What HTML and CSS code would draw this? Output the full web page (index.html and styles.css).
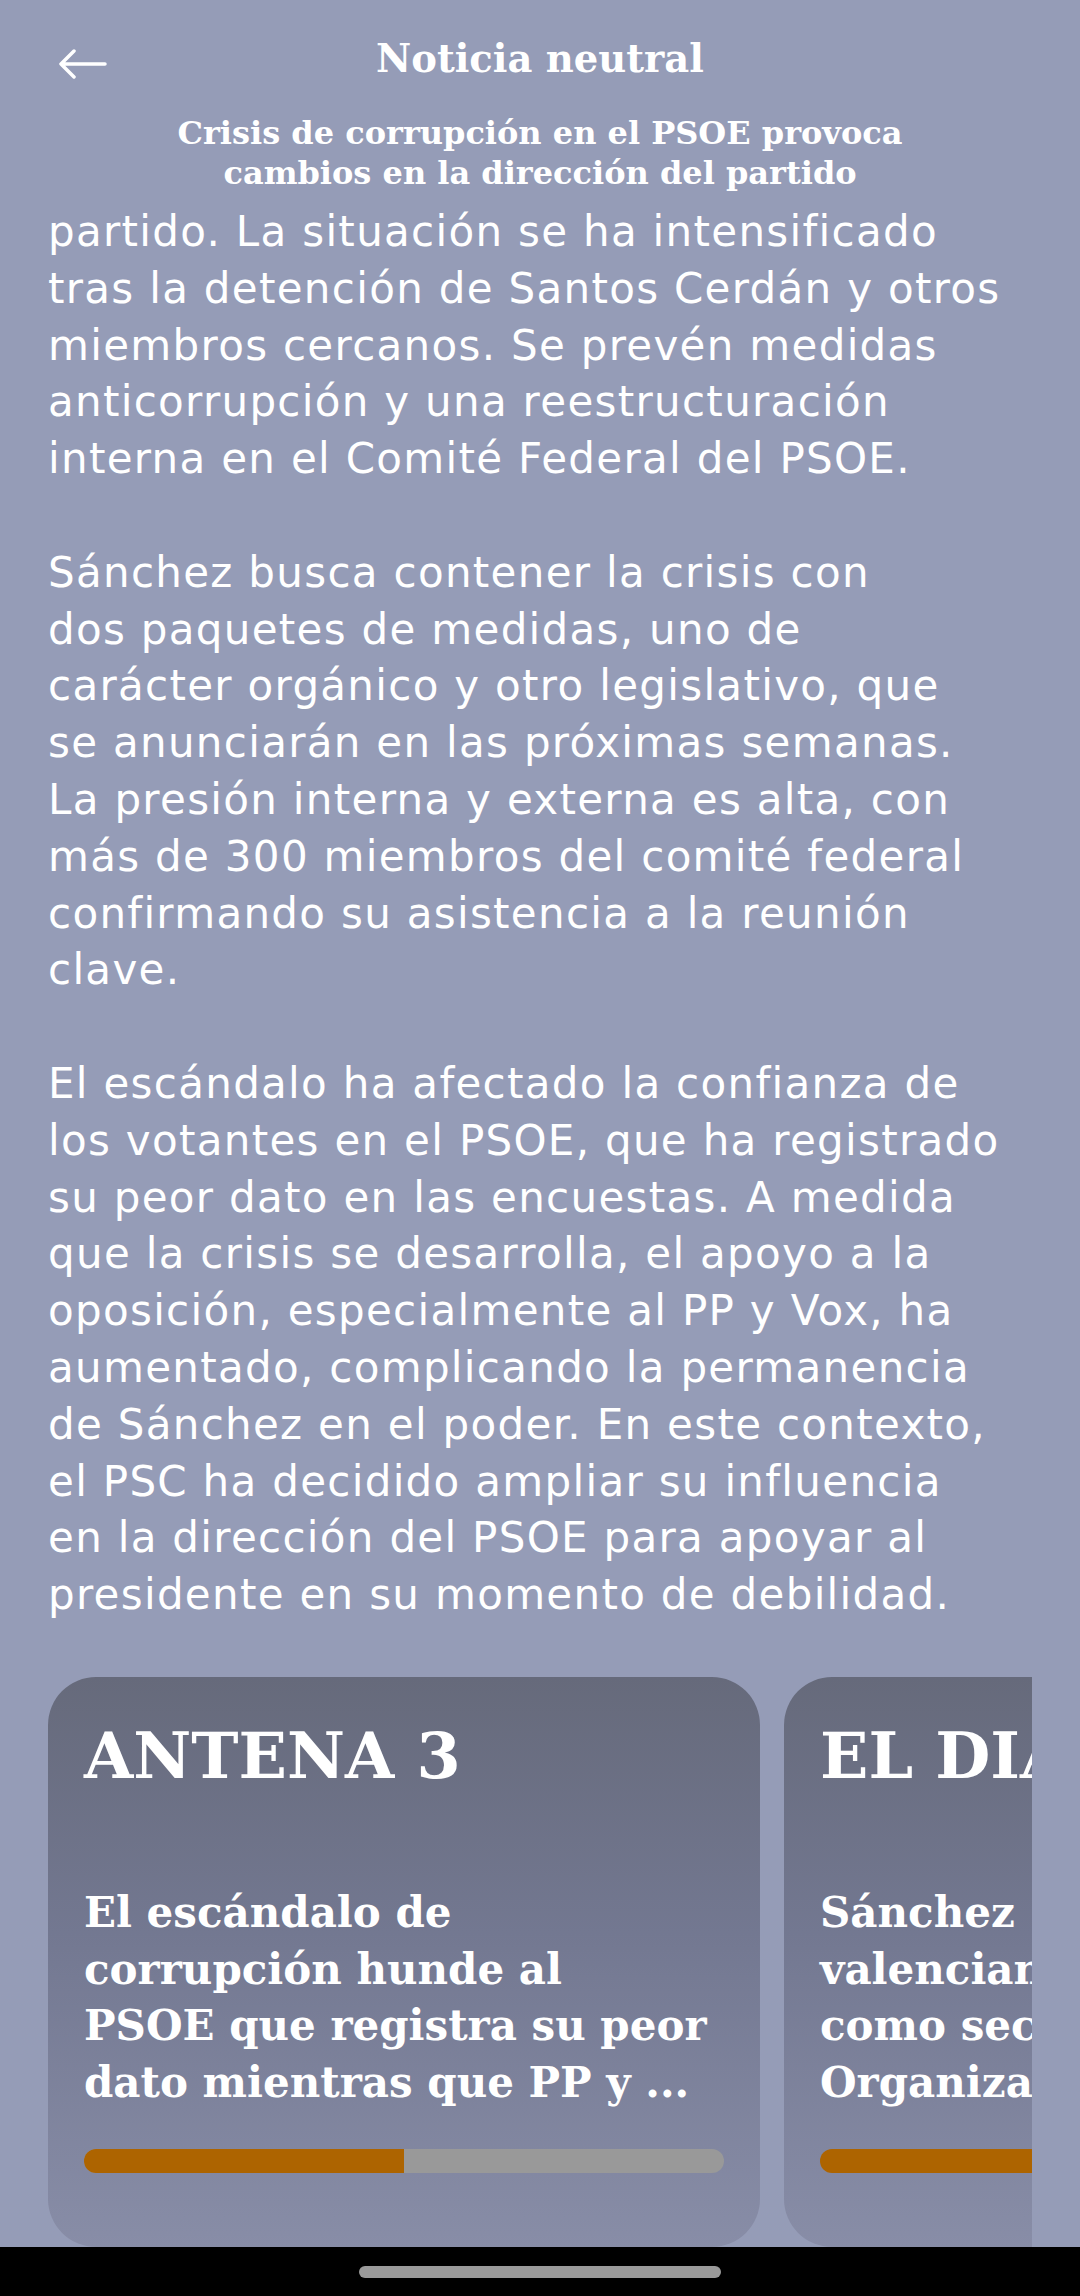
FILE: index.html
```html
<!DOCTYPE html>
<html lang="es">
<head>
<meta charset="utf-8">
<title>Noticia neutral</title>
<link rel="stylesheet" href="styles.css">
</head>
<body>
<div class="screen">
  <header class="topbar">
    <svg class="back" width="50" height="30" viewBox="0 0 50 30" aria-label="Volver">
      <path d="M3 15 H47 M16 2 L3 15 L16 28" fill="none" stroke="#fff" stroke-width="3.5" stroke-linecap="round" stroke-linejoin="round"/>
    </svg>
    <h1 class="title">Noticia neutral</h1>
    <span class="spacer"></span>
  </header>
  <h2 class="subtitle">Crisis de corrupción en el PSOE provoca<br>cambios en la dirección del partido</h2>
  <main class="article">
    <p>partido. La situación se ha intensificado<br>tras la detención de Santos Cerdán y otros<br>miembros cercanos. Se prevén medidas<br>anticorrupción y una reestructuración<br>interna en el Comité Federal del PSOE.</p>
    <p>Sánchez busca contener la crisis con<br>dos paquetes de medidas, uno de<br>carácter orgánico y otro legislativo, que<br>se anunciarán en las próximas semanas.<br>La presión interna y externa es alta, con<br>más de 300 miembros del comité federal<br>confirmando su asistencia a la reunión<br>clave.</p>
    <p>El escándalo ha afectado la confianza de<br>los votantes en el PSOE, que ha registrado<br>su peor dato en las encuestas. A medida<br>que la crisis se desarrolla, el apoyo a la<br>oposición, especialmente al PP y Vox, ha<br>aumentado, complicando la permanencia<br>de Sánchez en el poder. En este contexto,<br>el PSC ha decidido ampliar su influencia<br>en la dirección del PSOE para apoyar al<br>presidente en su momento de debilidad.</p>
  </main>
  <section class="sources">
    <article class="card">
      <h3 class="source">ANTENA 3</h3>
      <p class="headline">El escándalo de<br>corrupción hunde al<br>PSOE que registra su peor<br>dato mientras que PP y ...</p>
      <div class="bar"><div class="bar-fill" style="width:50%"></div></div>
    </article>
    <article class="card">
      <h3 class="source">EL DIARIO</h3>
      <p class="headline">Sánchez<br>valenciana Rebeca Torró<br>como secretaria de<br>Organización del PSOE</p>
      <div class="bar"><div class="bar-fill" style="width:100%"></div></div>
    </article>
  </section>
  <div class="navbar"><span class="pill"></span></div>
</div>
</body>
</html>
```

FILE: styles.css
```css
* { box-sizing: border-box; }
html, body {
  margin: 0;
  padding: 0;
  background: #959cb7;
}
.screen {
  width: 1080px;
  height: 2296px;
  overflow: hidden;
  display: flex;
  flex-direction: column;
  background: #959cb7;
  color: #ffffff;
}
.topbar {
  display: grid;
  grid-template-columns: 1fr auto 1fr;
  align-items: center;
  padding-top: 31px;
}
.back {
  justify-self: start;
  margin-left: 58px;
  margin-top: 9px;
  display: block;
}
.title {
  margin: 0;
  font-family: "DejaVu Serif", serif;
  font-weight: bold;
  font-size: 38.5px;
  line-height: 56px;
}
.subtitle {
  margin: 26px 0 0;
  text-align: center;
  font-family: "DejaVu Serif", serif;
  font-weight: bold;
  font-size: 32px;
  line-height: 40px;
}
.article {
  margin-top: 11px;
  padding: 0 48px;
  height: 1473px;
  font-family: "DejaVu Sans", sans-serif;
  font-weight: 400;
  font-size: 42px;
  letter-spacing: 1.3px;
  line-height: 56.8px;
  white-space: nowrap;
}
.article p {
  margin: 0 0 56.8px;
}
.sources {
  display: flex;
  gap: 24px;
  margin: 0 48px;
  overflow: hidden;
  height: 570px;
}
.card {
  flex: 0 0 712px;
  height: 570px;
  border-radius: 48px;
  padding: 39px 36px 0;
  background: linear-gradient(180deg, #666a7b 0%, #737891 45%, #888da7 100%);
  white-space: nowrap;
}
.source {
  margin: 0;
  font-family: "DejaVu Serif", serif;
  font-weight: bold;
  font-size: 63.5px;
  line-height: 80px;
}
.headline {
  margin: 89px 0 0;
  font-family: "DejaVu Serif", serif;
  font-weight: bold;
  font-size: 42px;
  line-height: 56.6px;
}
.bar {
  margin-top: 37.6px;
  height: 24px;
  border-radius: 12px;
  background: #999999;
  overflow: hidden;
}
.bar-fill {
  height: 100%;
  background: #ad6400;
}
.navbar {
  flex: 1;
  background: #000000;
  display: flex;
  justify-content: center;
  padding-top: 19px;
}
.pill {
  width: 362px;
  height: 12px;
  border-radius: 6px;
  background: #9a9a9a;
}
```
